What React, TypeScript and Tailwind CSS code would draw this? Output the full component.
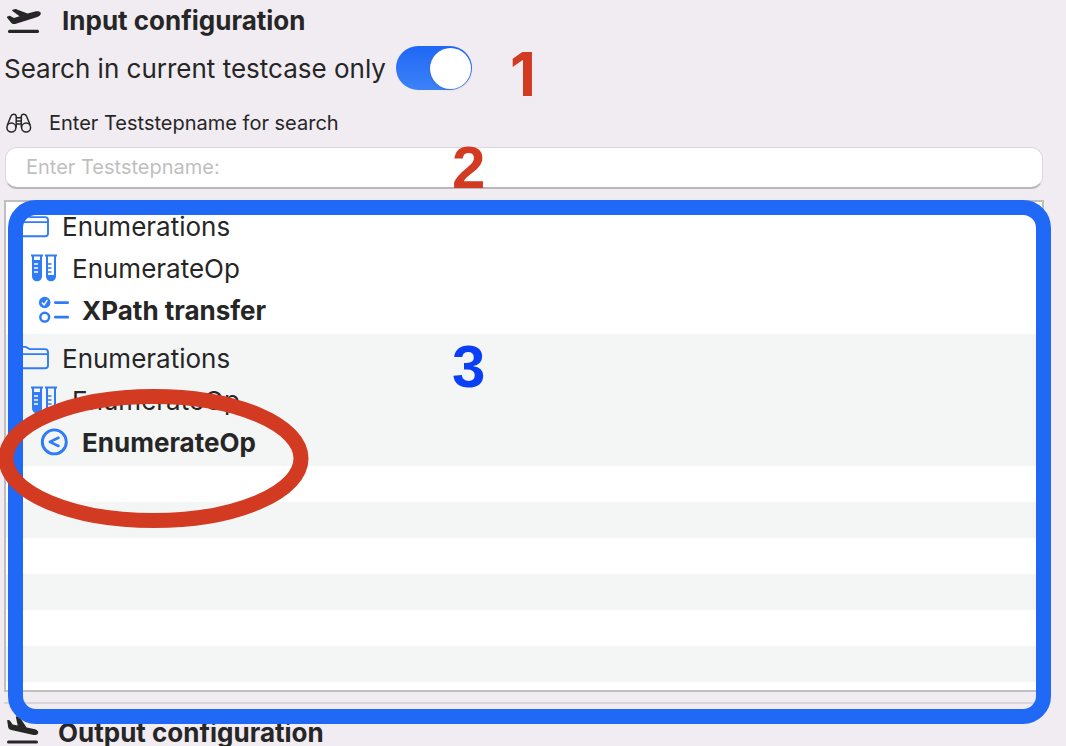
import React from "react";

const DepartureIcon = () => (
  <svg viewBox="0 0 36 28" className="h-7 w-9 shrink-0" fill="#262626" aria-hidden="true">
    <path d="M1.4 9.4 L3 8.9 C3.6 8.7 4.1 8.8 4.7 9.2 L8 10.9 L13.6 9.2 L6.5 4 C5.9 3.5 6 3 6.6 2.8 L8.8 2.2 C9.5 2 10.2 2.1 10.9 2.4 L21.6 6.6 L29 4.6 C31.5 3.9 34.3 4.2 34.8 6 C35.3 7.9 33.2 9.5 30.6 10.3 L10 16.8 C8 17.4 6.6 17.1 5.4 15.9 L1.3 10.9 C0.8 10.3 0.8 9.6 1.4 9.4Z" />
    <rect x="2" y="22.8" width="31" height="3.2" rx="1.5" />
  </svg>
);

const ArrivalIcon = () => (
  <svg viewBox="0 0 36 32" className="h-8 w-9 shrink-0" fill="#262626" aria-hidden="true">
    <path d="M1.9 6 L3.3 6.3 C3.9 6.5 4.3 6.8 4.6 7.4 L6.6 10.6 L11.7 11.6 L9.9 3.2 C9.8 2.5 10.1 2.2 10.8 2.4 L12.9 3 C13.6 3.2 14 3.6 14.4 4.3 L20.6 13.6 L28 15.1 C30.7 15.7 32.7 17 32.2 19 C31.7 20.9 29.1 21.4 26.5 20.8 L5.2 15.9 C3.2 15.4 2.3 14.4 2.1 12.7 L1.2 6.8 C1.1 6.2 1.4 5.9 1.9 6Z" />
    <rect x="1" y="26.4" width="31" height="3.2" rx="1.5" />
  </svg>
);

const BinocularsIcon = () => (
  <svg viewBox="0 0 26 20" className="h-5 w-[26px] shrink-0" fill="none" stroke="#262626" strokeWidth="1.5" strokeLinejoin="round" aria-hidden="true">
    <circle cx="5.4" cy="14.6" r="4.5" />
    <circle cx="20.1" cy="14.6" r="4.5" />
    <path d="M1.2 12.6 L4.9 3.2 C5.8 0.5 9.6 0.5 10.2 3 V14.6 M24.3 12.6 L20.6 3.2 C19.7 0.5 15.9 0.5 15.3 3 V14.6 M10.2 4.8 H15.3 M10.2 8 H15.3 M10.2 11 H15.3" />
  </svg>
);

const FolderIcon = () => (
  <svg viewBox="0 0 34 28" className="h-7 w-[34px] shrink-0" fill="none" stroke="#2f7cf6" strokeWidth="1.9" strokeLinejoin="round" aria-hidden="true">
    <path d="M4 2.9 H9 C11.2 2.9 12.2 5.1 14.4 5.1 H28.9 C31 5.1 32 6.1 32 8 V21.4 C32 23.3 31 24.2 28.9 24.2 H4 C1.9 24.2 1 23.1 1 21 V6 C1 4 2 2.9 4 2.9Z M1 10.1 H32" />
  </svg>
);

const TubesIcon = () => (
  <svg viewBox="0 0 26 28" className="h-7 w-[26px] shrink-0" fill="none" stroke="#2f7cf6" strokeWidth="2" aria-hidden="true">
    <path d="M0 1.5 H12 M14 1.5 H26" strokeWidth="1.8" />
    <path d="M2 1.5 V22.5 A4 3.8 0 0 0 10 22.5 V1.5 M16 1.5 V22.5 A4 3.8 0 0 0 24 22.5 V1.5" />
    <path d="M2 6 H10 V22.5 A4 3.8 0 0 1 2 22.5Z M16 21 H24 V22.5 A4 3.8 0 0 1 16 22.5Z" fill="#2f7cf6" stroke="none" />
    <path d="M16.5 10 H20.5 M16.5 14 H20.5 M16.5 18 H20.5" strokeWidth="1.3" />
    <path d="M3 10 H7 M3 14 H7 M3 18 H7" stroke="#fff" strokeWidth="1.3" />
  </svg>
);

const ChecklistIcon = () => (
  <svg viewBox="0 0 31 28" className="h-7 w-[31px] shrink-0" fill="none" stroke="#2f7cf6" strokeLinecap="round" strokeLinejoin="round" aria-hidden="true">
    <circle cx="6.7" cy="6.5" r="5.8" fill="#2f7cf6" stroke="none" />
    <path d="M4.3 7 L6.1 8.9 L9 4.3" stroke="#fff" strokeWidth="1.5" />
    <circle cx="6.7" cy="21.2" r="4.4" strokeWidth="2.5" />
    <path d="M17.3 6.6 H29.7 M17.3 21.2 H29.7" strokeWidth="2.7" />
  </svg>
);

const LessThanIcon = () => (
  <svg viewBox="0 0 31 28" className="h-7 w-[31px] shrink-0" fill="none" stroke="#2f7cf6" strokeWidth="2.9" strokeLinecap="round" strokeLinejoin="round" aria-hidden="true">
    <circle cx="16.3" cy="13.9" r="12" />
    <path d="M20.5 9.8 L11.8 13.9 L20.5 18" strokeWidth="2.6" />
  </svg>
);

type Result = { step: string; icon: React.ReactNode };

const results: Result[] = [
  { step: "XPath transfer", icon: <ChecklistIcon /> },
  { step: "EnumerateOp", icon: <LessThanIcon /> },
];

export default function App() {
  return (
    <main className="relative min-h-screen bg-[#f1ecf2] font-['Inter',sans-serif] text-[26px] text-[#262626]">
      <div className="flex h-[42px] items-center gap-5 pl-1.5">
        <DepartureIcon />
        <h2 className="font-bold leading-8">Input configuration</h2>
      </div>

      <div className="flex h-[52px] items-center gap-2.5 pl-1">
        <label htmlFor="scope" className="pt-0.5 leading-8">Search in current testcase only</label>
        <input
          id="scope"
          type="checkbox"
          role="switch"
          defaultChecked
          className="flex h-11 w-[76px] appearance-none items-center rounded-full bg-linear-to-b from-[#1f67f5] to-[#3d82f8] p-px before:size-[41px] before:rounded-full before:bg-white before:shadow-sm checked:justify-end"
        />
      </div>

      <div className="flex h-[53px] items-center gap-[17px] pl-1.5 pt-1">
        <BinocularsIcon />
        <label htmlFor="stepname" className="text-[20px] leading-6">Enter Teststepname for search</label>
      </div>
      <div className="pl-[5px] pr-[23px]">
        <input
          id="stepname"
          type="text"
          placeholder="Enter Teststepname:"
          className="block h-[42px] w-full rounded-xl border border-[#dcd7dd] border-b-2 border-b-[#bbb7bc] bg-white px-5 pb-0.5 text-[20px] placeholder:text-[#bfbfbf]"
        />
      </div>

      <div className="ml-1 mr-[22px] mt-[11px] border-2 border-[#bfbfbf] bg-white">
        <ul>
          {results.map((result) => (
            <li key={result.step} className="py-[3px] even:bg-[#f4f5f5]">
              <div className="flex h-[42px] items-center gap-3 pl-[10px]">
                <FolderIcon />
                <span>Enumerations</span>
              </div>
              <div className="flex h-[42px] items-center gap-[15px] pl-[25px]">
                <TubesIcon />
                <span>EnumerateOp</span>
              </div>
              <div className="flex h-[42px] items-center pl-8">
                <span className="flex w-11 justify-start">{result.icon}</span>
                <strong className="font-bold">{result.step}</strong>
              </div>
            </li>
          ))}
        </ul>
        <div aria-hidden="true">
          {[0, 1, 2, 3, 4, 5].map((row) => (
            <div key={row} className="h-9 even:bg-[#f4f5f5]" />
          ))}
          <div className="h-2" />
        </div>
      </div>

      <hr className="ml-1 mr-[22px] mt-[10px] border-t-2 border-[#d8d4d9]" />
      <div className="flex items-end gap-4 pl-1.5 pt-[10px]">
        <ArrivalIcon />
        <h2 className="font-bold leading-[26px]">Output configuration</h2>
      </div>

      <div className="pointer-events-none absolute left-2 right-[15px] top-[200px] h-[524px] rounded-[28px] border-[15px] border-[#1f69f6]" />
      <svg viewBox="0 0 312 140" className="pointer-events-none absolute -left-0.5 top-[389px] h-[140px] w-[312px]" fill="none" stroke="#d23a22" strokeWidth="15" aria-hidden="true">
        <ellipse cx="155.5" cy="69.5" rx="147.5" ry="62" />
      </svg>
      <span className="absolute left-[510px] top-[44px] font-['Inter',sans-serif] text-[60px] font-bold leading-[60px] text-[#d23a22]">1</span>
      <span className="absolute left-[452px] top-[138px] font-['Liberation_Sans',sans-serif] text-[60px] font-bold leading-[60px] text-[#d23a22]">2</span>
      <span className="absolute left-[452px] top-[337px] font-['Liberation_Sans',sans-serif] text-[60px] font-bold leading-[60px] text-[#0a3ff5]">3</span>
    </main>
  );
}
